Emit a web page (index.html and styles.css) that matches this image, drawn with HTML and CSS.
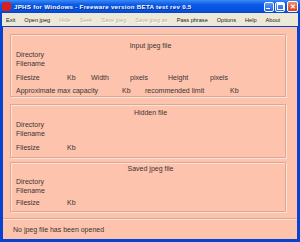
FILE: index.html
```html
<!DOCTYPE html>
<html lang="en">
<head>
    <meta charset="UTF-8">
    <title>JPHS for Windows</title>
    <link rel="stylesheet" href="styles.css">
</head>
<body>
    <div class="window">
        <div class="titlebar">
            <span class="app-icon"></span>
            <span class="title">JPHS for Windows - Freeware version BETA test rev 0.5</span>
            <span class="btn btn-min"><span></span></span>
            <span class="btn btn-max"><span></span></span>
            <span class="btn btn-close">&#x2715;</span>
        </div>
        <div class="menubar">
            <span class="item">Exit</span>
            <span class="item">Open jpeg</span>
            <span class="item off">Hide</span>
            <span class="item off">Seek</span>
            <span class="item off">Save jpeg</span>
            <span class="item off">Save jpeg as</span>
            <span class="item">Pass phrase</span>
            <span class="item">Options</span>
            <span class="item">Help</span>
            <span class="item">About</span>
        </div>
        <div class="client">
            <div class="group g-input">
                <div class="caption">Input jpeg file</div>
                <div class="row">Directory</div>
                <div class="row">Filename</div>
                <div class="row sp1">
                    <span class="c51">Filesize</span><span class="c24">Kb</span><span class="c39">Width</span><span class="c38">pixels</span><span class="c42">Height</span><span>pixels</span>
                </div>
                <div class="row sp2">
                    <span class="c106">Approximate max capacity</span><span class="c23">Kb</span><span class="c85">recommended limit</span><span>Kb</span>
                </div>
            </div>
            <div class="group g-hidden">
                <div class="caption">Hidden file</div>
                <div class="row">Directory</div>
                <div class="row">Filename</div>
                <div class="row sp1"><span class="c51">Filesize</span><span>Kb</span></div>
            </div>
            <div class="group g-saved">
                <div class="caption">Saved jpeg file</div>
                <div class="row">Directory</div>
                <div class="row">Filename</div>
                <div class="row sp3"><span class="c51">Filesize</span><span>Kb</span></div>
            </div>
            <div class="status">No jpeg file has been opened</div>
        </div>
    </div>
</body>
</html>
```

FILE: styles.css
```css
body {
    margin: 0;
    padding: 0;
    font-family: "Liberation Sans", Arial, sans-serif;
}
.window {
    width: 300px;
    height: 242px;
    display: flex;
    flex-direction: column;
    background-color: #0842d0;
}
.titlebar {
    height: 13px;
    display: flex;
    align-items: center;
    padding: 0 2px 0 2px;
    background: linear-gradient(#3d8af7, #0a5ae6 35%, #0552e0 80%, #0a44c4);
    color: white;
}
.app-icon {
    width: 9px;
    height: 9px;
    flex: none;
    background-color: #d8201c;
    border-radius: 2px;
    margin-right: 3px;
}
.title {
    flex: 1;
    min-width: 0;
    overflow: hidden;
    white-space: nowrap;
    font-size: 6.2px;
    font-weight: bold;
    letter-spacing: 0.27px;
    text-shadow: 1px 1px 0 #0a2a8a;
}
.btn {
    flex: none;
    width: 10px;
    height: 10px;
    margin-left: 1px;
    border: 1px solid white;
    border-radius: 2px;
    box-sizing: border-box;
    background: linear-gradient(#5b9af8, #2563e8);
    display: flex;
    align-items: center;
    justify-content: center;
}
.btn-min span {
    width: 4px;
    height: 1px;
    background: white;
    margin-top: 4px;
    margin-right: 2px;
}
.btn-max span {
    width: 5px;
    height: 4px;
    border: 1px solid white;
    border-top-width: 2px;
}
.btn-close {
    width: 11px;
    height: 11px;
    margin-left: 2px;
    background: linear-gradient(#f08a6a, #d7401c);
    color: white;
    font-size: 7px;
    font-weight: bold;
}
.menubar {
    height: 13px;
    background-color: #ece9d8;
    display: flex;
    align-items: center;
    padding-left: 4px;
    font-size: 5.6px;
    color: #222;
    margin: 0 2px;
    white-space: nowrap;
}
.menubar .item {
    margin-right: 9px;
}
.menubar .off {
    color: #b8b4a4;
    text-shadow: 1px 1px 0 #fff;
}
.client {
    flex: 1;
    margin: 1px 3px 3px 3px;
    background-color: #fdc3ad;
    padding: 7px 11px 0 7px;
    font-size: 7px;
    color: #3c3434;
}
.group {
    border: 1px solid #dba999;
    box-shadow: inset 1px 1px 0 #ffe2d6, 1px 1px 0 #ffe2d6;
    padding: 6px 0 0 5px;
}
.g-input {
    height: 55px;
}
.g-hidden {
    margin-top: 7px;
    height: 49px;
    padding-top: 3px;
}
.g-saved {
    margin-top: 4px;
    height: 47px;
    padding-top: 1px;
}
.caption {
    text-align: center;
    line-height: 9px;
}
.g-hidden .caption {
    margin-bottom: 3px;
}
.g-saved .caption {
    margin-bottom: 4px;
}
.row {
    line-height: 9px;
    white-space: nowrap;
}
.row span {
    display: inline-block;
}
.sp1 {
    margin-top: 5px;
}
.sp2 {
    margin-top: 4px;
}
.sp3 {
    margin-top: 3px;
}
.c23 { width: 23px; }
.c24 { width: 24px; }
.c38 { width: 38px; }
.c39 { width: 39px; }
.c42 { width: 42px; }
.c51 { width: 51px; }
.c85 { width: 85px; }
.c106 { width: 106px; }
.status {
    margin: 6px -11px 0 -7px;
    border-top: 1px solid #dba999;
    box-shadow: inset 0 1px 0 #ffe2d6;
    padding: 6px 0 0 10px;
    line-height: 9px;
}
```
